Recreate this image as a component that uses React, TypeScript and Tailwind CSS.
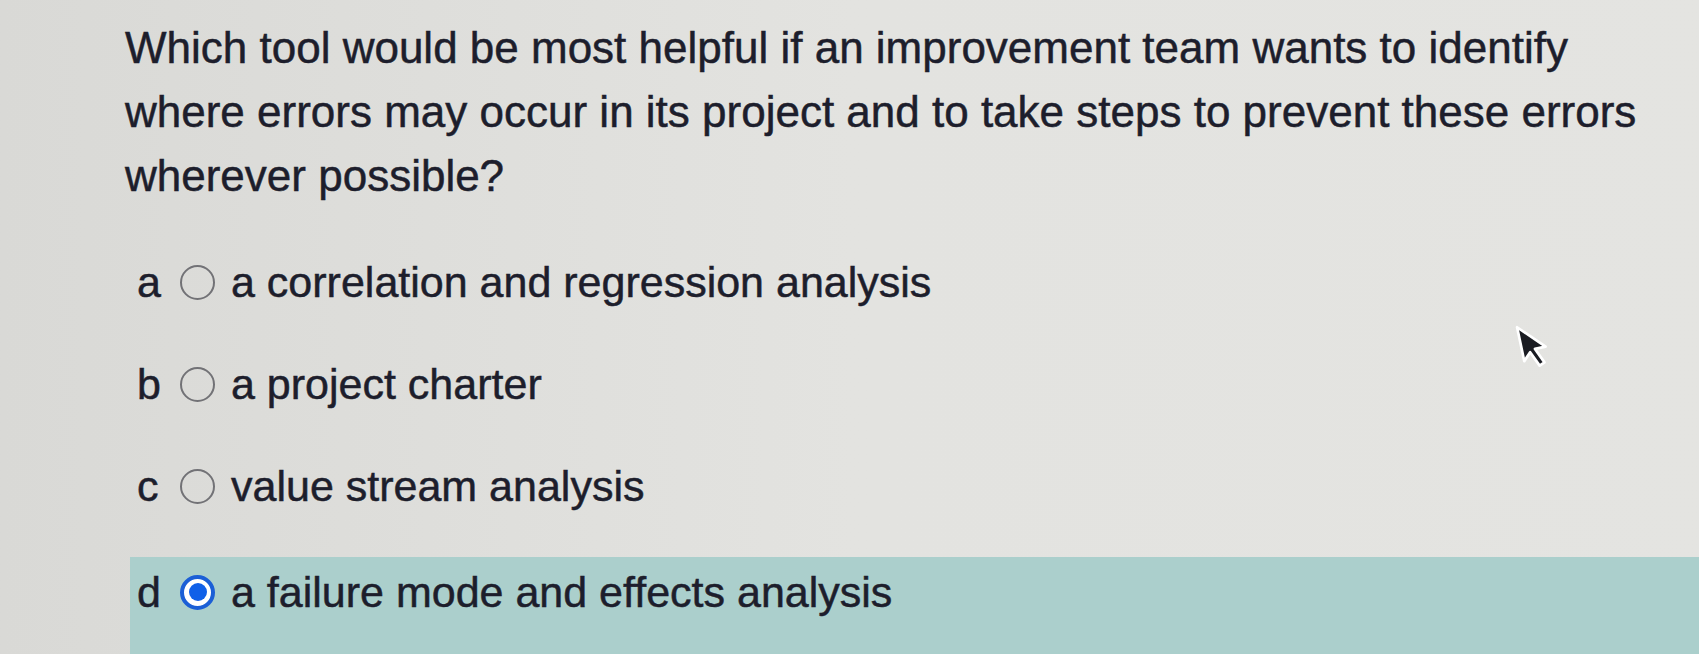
import { ReactNode } from 'react';

const options = [
  { letter: 'a', text: 'a correlation and regression analysis', selected: false },
  { letter: 'b', text: 'a project charter', selected: false },
  { letter: 'c', text: 'value stream analysis', selected: false },
];

function Radio({ selected }: { selected: boolean }) {
  if (selected) {
    return (
      <span className="flex items-center justify-center w-[35px] h-[35px] rounded-full border-[4px] border-[#1b5fd6] bg-white shrink-0">
        <span className="w-[18px] h-[18px] rounded-full bg-[#1060e8]" />
      </span>
    );
  }
  return <span className="w-[35px] h-[35px] rounded-full border-2 border-[#727276] shrink-0" />;
}

function Row({ letter, children, selected }: { letter: string; children: ReactNode; selected: boolean }) {
  return (
    <div className="flex items-center text-[43px]">
      <span className="w-[50px] pl-[7px]">{letter}</span>
      <Radio selected={selected} />
      <span className="ml-[16px]">{children}</span>
    </div>
  );
}

export default function App() {
  return (
    <div
      className="relative w-[1699px] h-[654px] overflow-hidden bg-gradient-to-r from-[#d9d9d6] via-[#e3e3e0] to-[#e4e4e1] text-[#1d1e2c] text-[44px] [-webkit-text-stroke:0.5px_#1d1e2c]"
      style={{ fontFamily: '"Liberation Sans", Arial, sans-serif' }}
    >
      <div className="pl-[125px] pt-[16px] pr-[40px] leading-[64px]">
        Which tool would be most helpful if an improvement team wants to identify where errors may occur in its project and to take steps to prevent these errors wherever possible?
      </div>

      <div className="mt-[23px]">
        {options.map((o) => (
          <div key={o.letter} className="h-[102px] ml-[130px] flex items-center">
            <Row letter={o.letter} selected={o.selected}>
              {o.text}
            </Row>
          </div>
        ))}
        <div className="mt-[20px] ml-[130px] h-[104px] bg-[#abcfcc] pt-[3px]">
          <Row letter="d" selected>
            a failure mode and effects analysis
          </Row>
        </div>
      </div>

      <svg className="absolute left-[1511px] top-[324px]" width="36" height="52" viewBox="0 0 32 48">
        <path
          d="M5 3 L5 35 L12 28 L18 42 L23 40 L17 26 L27 26 Z"
          transform="rotate(-12 5 3)"
          fill="#1a1c22"
          stroke="#ffffff"
          strokeWidth="2.5"
          strokeLinejoin="round"
        />
      </svg>
    </div>
  );
}
